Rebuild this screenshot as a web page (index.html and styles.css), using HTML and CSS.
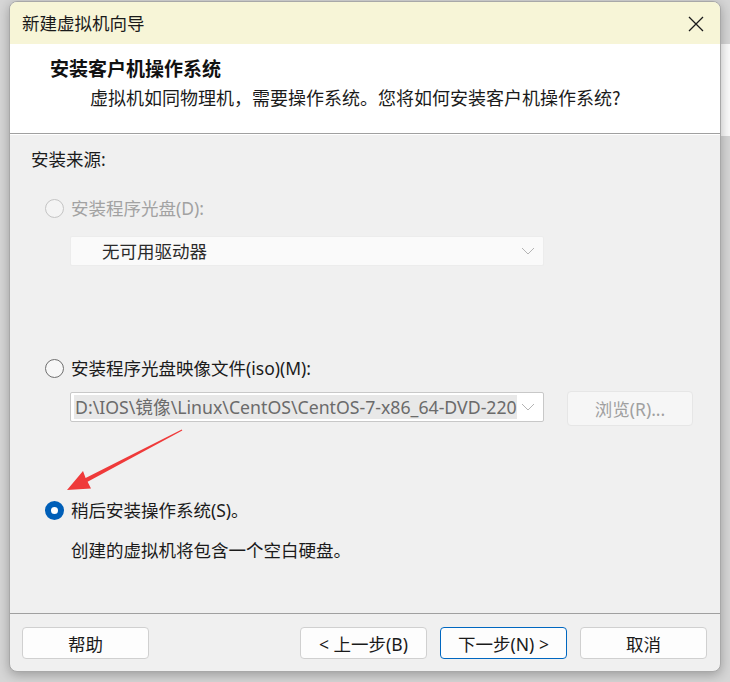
FILE: index.html
```html
<!DOCTYPE html>
<html lang="zh-CN">
<head>
<meta charset="utf-8">
<title>新建虚拟机向导</title>
<link rel="stylesheet" href="styles.css">
</head>
<body>
<div class="desk-strip"></div>
<div class="window">
  <div class="titlebar">
    <span class="title">新建虚拟机向导</span>
    <svg class="close" width="16" height="16" viewBox="0 0 16 16"><path d="M1 1 L15 15 M15 1 L1 15" stroke="#1a1a1a" stroke-width="1.3" fill="none"/></svg>
  </div>
  <div class="header">
    <div class="h-title">安装客户机操作系统</div>
    <div class="h-sub">虚拟机如同物理机，需要操作系统。您将如何安装客户机操作系统?</div>
  </div>
  <div class="content">
    <div class="label">安装来源:</div>
    <div class="radio disabled r1"><span class="dot"></span><span>安装程序光盘(D):</span></div>
    <div class="combo c1"><span class="ctext">无可用驱动器</span><svg class="chev" width="14" height="8" viewBox="0 0 14 8"><path d="M1 1 L7 7 L13 1" stroke="#b4b4b4" stroke-width="1" fill="none"/></svg></div>
    <div class="radio r2"><span class="dot"></span><span>安装程序光盘映像文件(iso)(M):</span></div>
    <div class="iso-row">
      <div class="combo c2"><span class="ctext sel">D:\IOS\镜像\Linux\CentOS\CentOS-7-x86_64-DVD-220</span><svg class="chev" width="14" height="8" viewBox="0 0 14 8"><path d="M1 1 L7 7 L13 1" stroke="#b4b4b4" stroke-width="1" fill="none"/></svg></div>
      <div class="browse">浏览(R)...</div>
    </div>
    <div class="radio checked r3"><span class="dot"></span><span>稍后安装操作系统(S)。</span></div>
    <div class="desc">创建的虚拟机将包含一个空白硬盘。</div>
    <svg class="arrow" width="700" height="478" viewBox="0 0 700 478"><polygon points="57,355 73,336 75.6,343 171.8,294.4 172.3,295.5 77.6,346.8 81,353.5" fill="#ef3a3a"/></svg>
  </div>
  <div class="footer">
    <div class="btn">帮助</div>
    <div class="spacer"></div>
    <div class="btn">&lt; 上一步(B)</div>
    <div class="btn primary">下一步(N) &gt;</div>
    <div class="btn">取消</div>
  </div>
</div>
</body>
</html>
```
FILE: styles.css
```css
* { box-sizing: border-box; }
html, body { margin: 0; padding: 0; }
body {
  width: 730px;
  height: 682px;
  overflow: hidden;
  background: #d6d6d6;
  font-family: "Noto Sans", "Noto Sans CJK SC", sans-serif;
  font-size: 17.5px;
  color: #1b1b1b;
  position: relative;
  padding-top: 1px;
}
.desk-strip {
  position: absolute;
  left: 720px;
  top: 44px;
  width: 10px;
  height: 92px;
  background: #fbfbfb;
}
.window {
  position: relative;
  margin-left: 9px;
  width: 712px;
  height: 671px;
  border: 1px solid #a8a8a8;
  border-radius: 8px;
  background: #f0f0f0;
  box-shadow: 0 3px 12px rgba(0,0,0,0.28);
  display: flex;
  flex-direction: column;
  overflow: hidden;
}
.titlebar {
  height: 42px;
  flex: none;
  background: #f7f5d7;
  display: flex;
  align-items: center;
  padding-left: 12px;
  padding-right: 16px;
}
.title {
  font-family: "Noto Sans CJK SC", sans-serif;
  font-size: 17.5px;
  line-height: 24px;
  color: #1a1a1a;
  flex: 1;
}
.close { display: block; margin-top: 1px; }
.header {
  flex: none;
  height: 90px;
  background: #ffffff;
  border-bottom: 1px solid #a0a0a0;
  padding-top: 12px;
  padding-left: 40px;
}
.h-title {
  font-family: "Noto Sans CJK SC", sans-serif;
  font-weight: 700;
  font-size: 19px;
  line-height: 24px;
  color: #111;
}
.h-sub {
  margin-top: 5px;
  padding-left: 40px;
  font-family: "Noto Sans CJK SC", sans-serif;
  font-size: 18px;
  line-height: 24px;
  color: #1a1a1a;
}
.content {
  position: relative;
  flex: none;
  height: 479px;
  border-top: 1px solid #ffffff;
  padding-top: 12px;
  padding-left: 21px;
}
.label {
  line-height: 24px;
}
.radio {
  display: flex;
  align-items: center;
  gap: 7px;
  height: 24px;
  line-height: 24px;
  margin-left: 14px;
}
.radio .dot {
  width: 19px;
  height: 19px;
  border-radius: 50%;
  border: 1px solid #6f6f6f;
  background: #f7f7f7;
  flex: none;
}
.radio.disabled { color: #a2a2a2; }
.radio.disabled .dot { border-color: #c4c4c4; background: #f4f4f4; }
.radio.checked .dot {
  border: 6px solid #005fb8;
  background: #ffffff;
}
.r1 { margin-top: 25px; }
.r2 { margin-top: 90px; }
.r3 { margin-top: 72px; }
.combo {
  display: flex;
  align-items: center;
  width: 474px;
  height: 30px;
  margin-left: 39px;
  padding-right: 8px;
}
.combo .ctext {
  white-space: nowrap;
  line-height: 24px;
}
.combo .chev { flex: none; margin-left: auto; }
.c1 {
  margin-top: 16px;
  background: #fafafa;
  border: 1px solid #ececec;
  border-radius: 2px;
  padding-left: 31px;
  color: #2a2a2a;
}
.iso-row {
  display: flex;
  align-items: flex-start;
  gap: 23px;
  margin-top: 11px;
}
.c2 {
  margin-top: 1px;
  background: #ffffff;
  border: 1px solid #c8c8c8;
  border-radius: 2px;
  padding-left: 3px;
  color: #6b6b6b;
}
.c2 .ctext {
  background: #e8e8e8;
  padding-left: 1px;
  height: 24px;
  font-size: 17.7px;
}
.browse {
  width: 126px;
  height: 35px;
  background: #f6f6f6;
  border: 1px solid #e6e6e6;
  border-radius: 4px;
  color: #a0a0a0;
  display: flex;
  align-items: center;
  justify-content: center;
}
.desc {
  margin-top: 16px;
  margin-left: 40px;
  line-height: 24px;
}
.arrow {
  position: absolute;
  left: 0;
  top: 0;
  pointer-events: none;
}
.footer {
  flex: 1;
  border-top: 1px solid #a0a0a0;
  padding: 13px 13px 0 12px;
  display: flex;
  align-items: flex-start;
  gap: 13px;
}
.spacer { flex: 1; }
.btn {
  width: 127px;
  height: 32px;
  background: #fdfdfd;
  border: 1px solid #d0d0d0;
  border-radius: 4px;
  display: flex;
  align-items: center;
  justify-content: center;
  color: #1a1a1a;
}
.btn.primary { border-color: #0067c0; }
```
